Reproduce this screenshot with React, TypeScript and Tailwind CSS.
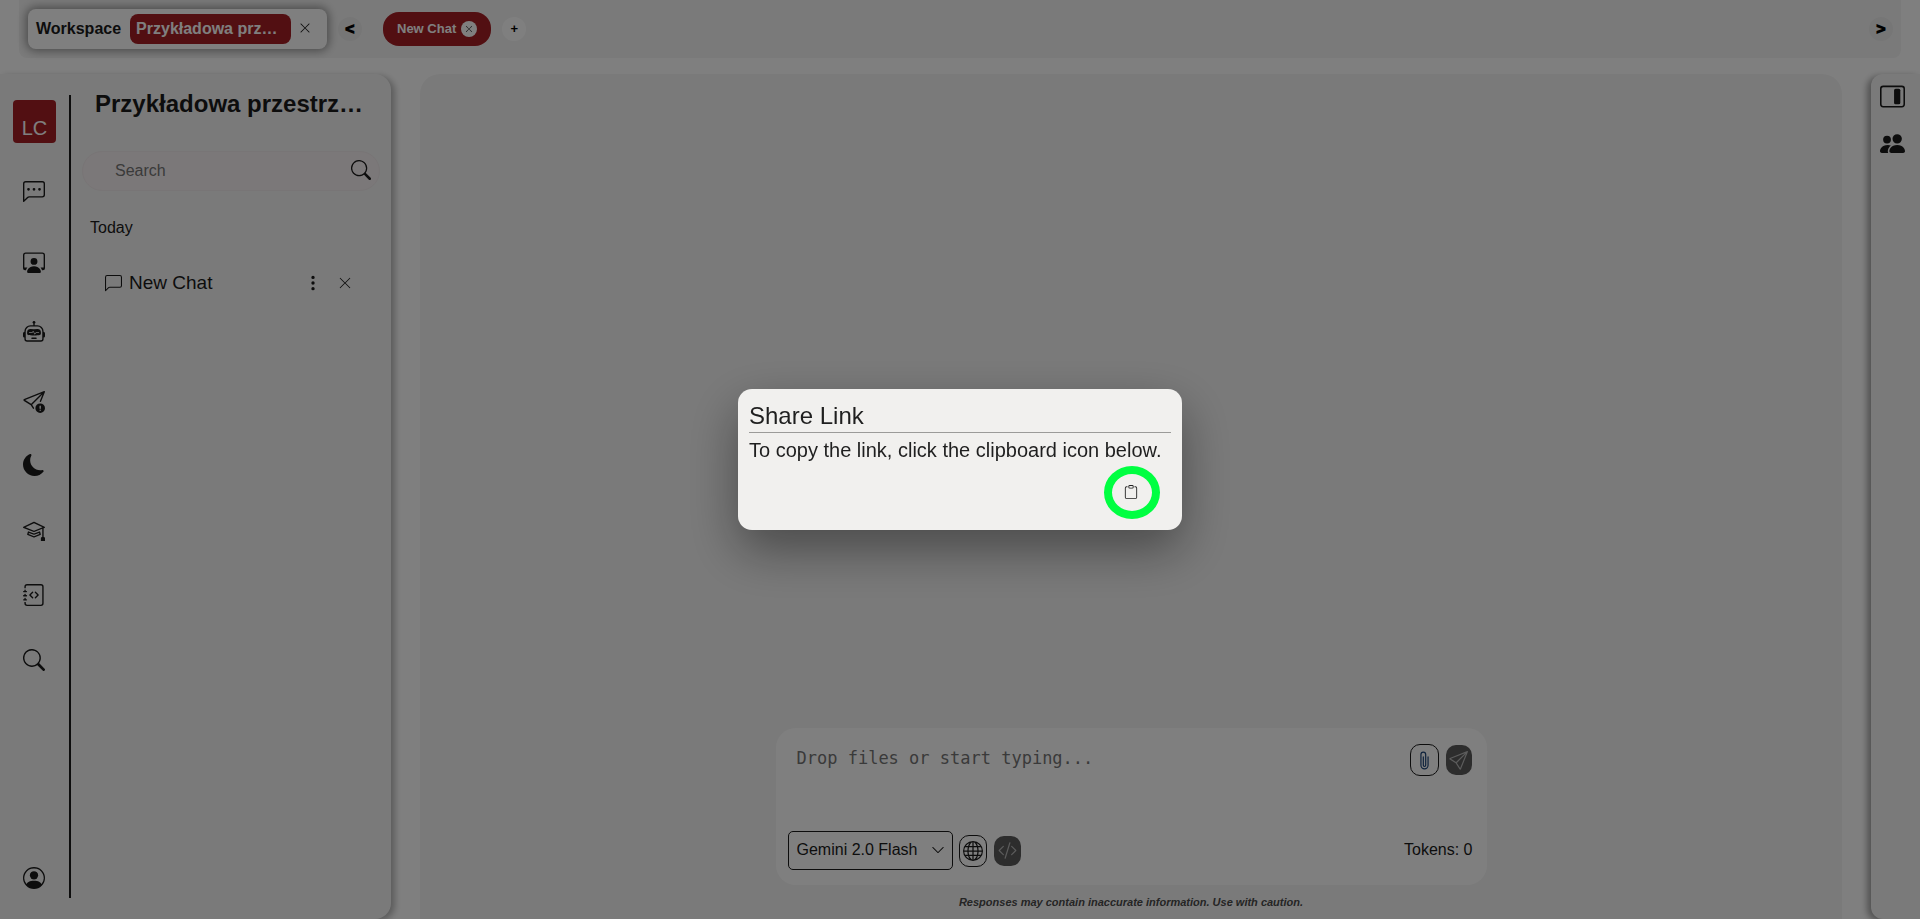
import { useState } from "react";
import type { ReactNode } from "react";
import {
  BsChatLeft,
  BsChatLeftDots,
  BsChevronDown,
  BsClipboard,
  BsCodeSlash,
  BsGlobe,
  BsJournalCode,
  BsLayoutSidebarInsetReverse,
  BsMoonFill,
  BsMortarboard,
  BsPaperclip,
  BsPeopleFill,
  BsPersonCircle,
  BsPersonWorkspace,
  BsRobot,
  BsSearch,
  BsSend,
  BsSendExclamation,
  BsThreeDotsVertical,
  BsXLg,
} from "react-icons/bs";

type NavItem = { label: string; icon: ReactNode };

const primaryNav: NavItem[] = [
  { label: "Chats", icon: <BsChatLeftDots size={22} /> },
  { label: "Workspaces", icon: <BsPersonWorkspace size={22} /> },
  { label: "Assistants", icon: <BsRobot size={22} /> },
  { label: "Report a problem", icon: <BsSendExclamation size={22} /> },
];

const secondaryNav: NavItem[] = [
  { label: "Dark mode", icon: <BsMoonFill size={22} /> },
  { label: "Tutorials", icon: <BsMortarboard size={22} /> },
  { label: "Prompt library", icon: <BsJournalCode size={22} /> },
  { label: "Search everything", icon: <BsSearch size={22} /> },
];

function TopBar() {
  return (
    <header className="mx-[19px] flex h-[58px] shrink-0 items-center rounded-b-lg bg-[#f5f5f5] pr-2 pl-[9px]">
      <div className="flex h-10 w-[299px] items-center rounded-lg bg-white pl-2 font-bold shadow-[0_0_10px_2px_rgba(0,0,0,0.4)]">
        <span>Workspace</span>
        <button className="ml-[9px] h-[30px] w-[161px] truncate rounded-lg bg-[#a51e24] px-1.5 text-left text-white">
          Przykładowa prz…
        </button>
        <button aria-label="Close workspace" className="ml-2 pb-0.5">
          <BsXLg size={12} />
        </button>
      </div>
      <button
        aria-label="Previous tabs"
        className="ml-[11px] flex size-6 items-center justify-center rounded-full bg-[#ececec] pb-0.5 font-['Inter',sans-serif] text-[17px] leading-none font-black text-black"
      >
        &lt;
      </button>
      <div className="ml-[21px] flex h-[34px] items-center gap-[5px] rounded-2xl bg-[#a51e24] px-3.5 text-[13px] font-bold text-white">
        <span>New Chat</span>
        <button
          aria-label="Close New Chat"
          className="flex size-4 items-center justify-center rounded-full bg-white text-[#1a1a1a]"
        >
          <BsXLg size={8} />
        </button>
      </div>
      <button
        aria-label="New tab"
        className="ml-[11px] flex size-6 items-center justify-center rounded-full bg-white pb-px text-[13px] leading-none font-bold text-black"
      >
        +
      </button>
      <button
        aria-label="Next tabs"
        className="ml-auto flex size-6 items-center justify-center rounded-full bg-[#ececec] pb-0.5 font-['Inter',sans-serif] text-[17px] leading-none font-black text-black"
      >
        &gt;
      </button>
    </header>
  );
}

function NavLinks({ items }: { items: NavItem[] }) {
  return items.map((item) => (
    <li key={item.label}>
      <button aria-label={item.label} className="block">
        {item.icon}
      </button>
    </li>
  ));
}

function NavRail() {
  return (
    <nav className="flex w-[69px] shrink-0 flex-col items-center pt-[26px] pb-[30px]">
      <div className="mb-[38px] flex size-[43px] items-end justify-center rounded bg-[#a51e24] text-xl leading-[30px] text-white">
        LC
      </div>
      <ul className="flex flex-col gap-12 pr-px">
        <NavLinks items={primaryNav} />
      </ul>
      <ul className="mt-[41px] flex flex-col gap-[43px] pr-px">
        <NavLinks items={secondaryNav} />
      </ul>
      <button aria-label="Account" className="mt-auto pr-px">
        <BsPersonCircle size={22} />
      </button>
    </nav>
  );
}

function Sidebar() {
  return (
    <aside className="flex w-[391px] shrink-0 rounded-r-2xl bg-[#f5f5f5] shadow-[4px_2px_6px_0_rgba(0,0,0,0.28)]">
      <NavRail />
      <div className="mt-[21px] mb-[21px] w-0.5 bg-[#1a1a1a]" />
      <div className="flex min-w-0 flex-1 flex-col pt-[14px] pr-[11px] pl-[11px]">
        <h1 className="truncate px-[13px] text-2xl leading-8 font-bold">Przykładowa przestrz…</h1>
        <div className="mt-[31px] flex h-10 items-center rounded-full border border-[#f0eaec] bg-[#f7f0f2] pr-2 pl-8">
          <input
            type="search"
            aria-label="Search"
            placeholder="Search"
            className="min-w-0 flex-1 bg-transparent text-base outline-none placeholder:text-[#757575]"
          />
          <button aria-label="Run search" className="pb-0.5">
            <BsSearch size={20} />
          </button>
        </div>
        <h2 className="mt-[25px] px-2 text-base leading-6">Today</h2>
        <div className="mt-[29px] flex h-7 items-center pr-6 pl-[23px]">
          <BsChatLeft size={17} />
          <a href="#chat" className="ml-[7px] flex-1 text-[19px] leading-7">
            New Chat
          </a>
          <button aria-label="Chat options" className="mr-4">
            <BsThreeDotsVertical size={18} />
          </button>
          <button aria-label="Delete chat" className="mr-1">
            <BsXLg size={14} />
          </button>
        </div>
      </div>
    </aside>
  );
}

function Composer() {
  return (
    <form className="w-1/2 rounded-[20px] bg-white" onSubmit={(event) => event.preventDefault()}>
      <div className="flex h-[102px] items-start pt-4 pr-[15px] pl-[21px]">
        <textarea
          aria-label="Message"
          placeholder="Drop files or start typing..."
          className="h-20 min-w-0 flex-1 resize-none bg-transparent font-['DejaVu_Sans_Mono',monospace] text-[17px] leading-7 outline-none placeholder:text-[#757575]"
        />
        <button
          type="button"
          aria-label="Attach files"
          className="flex h-8 w-[29px] items-center justify-center rounded-[10px] border border-[#1a1a1a] text-[#1c4478]"
        >
          <BsPaperclip size={19} />
        </button>
        <button
          aria-label="Send"
          className="mt-px ml-[7px] flex h-[30px] w-[26px] items-center justify-center rounded-[10px] bg-[#5a5a5a] text-[#b8b8b8]"
        >
          <BsSend size={19} />
        </button>
      </div>
      <div className="flex h-[55px] items-center pr-[14px] pb-[14px] pl-3">
        <div className="relative">
          <select
            aria-label="Model"
            className="block h-[39px] w-[165px] appearance-none rounded-[5px] border border-[#1a1a1a] bg-white pb-0.5 pl-2 text-base outline-none"
          >
            <option>Gemini 2.0 Flash</option>
          </select>
          <BsChevronDown size={14} className="pointer-events-none absolute top-3 right-2" />
        </div>
        <button
          type="button"
          aria-label="Web search"
          className="ml-1.5 flex h-8 w-7 items-center justify-center rounded-[10px] border border-[#1a1a1a]"
        >
          <BsGlobe size={20} />
        </button>
        <button
          type="button"
          aria-label="Code mode"
          className="ml-[7px] flex h-[30px] w-[27px] items-center justify-center rounded-[10px] bg-[#5a5a5a] text-[#b8b8b8]"
        >
          <BsCodeSlash size={19} />
        </button>
        <span className="ml-auto pb-px text-base">Tokens: 0</span>
      </div>
    </form>
  );
}

function ShareDialog({ onCopy }: { onCopy: () => void }) {
  return (
    <div className="fixed inset-0 flex items-center justify-center bg-black/50">
      <div
        role="dialog"
        aria-labelledby="share-title"
        className="w-[444px] rounded-[14px] bg-[#f1f0ee] px-[11px] pt-3 pb-[11px] text-[#1f1f1f] shadow-[0_20px_50px_rgba(0,0,0,0.4)]"
      >
        <h2 id="share-title" className="border-b border-[#9b9b99] pb-px text-2xl leading-[30px]">
          Share Link
        </h2>
        <p className="pt-0.5 pb-px text-xl leading-[30px] whitespace-nowrap">
          To copy the link, click the clipboard icon below.
        </p>
        <div className="flex justify-end pr-[11px]">
          <button
            aria-label="Copy link"
            onClick={onCopy}
            className="flex h-[53px] w-14 items-center justify-center rounded-[50%] border-8 border-[#00ff41] pr-0.5 pb-px"
          >
            <BsClipboard size={14} />
          </button>
        </div>
      </div>
    </div>
  );
}

export default function App() {
  const [open, setOpen] = useState(true);
  return (
    <div className="flex h-screen flex-col overflow-hidden bg-white font-['Liberation_Sans',Arial,sans-serif] text-[#1a1a1a]">
      <TopBar />
      <div className="mt-4 flex min-h-0 flex-1">
        <Sidebar />
        <main className="mx-[29px] flex min-w-0 flex-1 flex-col items-center justify-end rounded-t-[20px] bg-[#f5f5f5] pb-2">
          <Composer />
          <p className="mt-2 text-[11px] leading-[18px] font-bold text-[#4a4a4a] italic">
            Responses may contain inaccurate information. Use with caution.
          </p>
        </main>
        <aside className="flex w-[49px] shrink-0 flex-col items-center gap-[22px] rounded-l-xl bg-[#f5f5f5] pt-2.5 pr-[7px] shadow-[-4px_2px_6px_0_rgba(0,0,0,0.35)]">
          <button aria-label="Toggle panel">
            <BsLayoutSidebarInsetReverse size={25} />
          </button>
          <button aria-label="Members">
            <BsPeopleFill size={25} />
          </button>
        </aside>
      </div>
      {open && <ShareDialog onCopy={() => setOpen(false)} />}
    </div>
  );
}
